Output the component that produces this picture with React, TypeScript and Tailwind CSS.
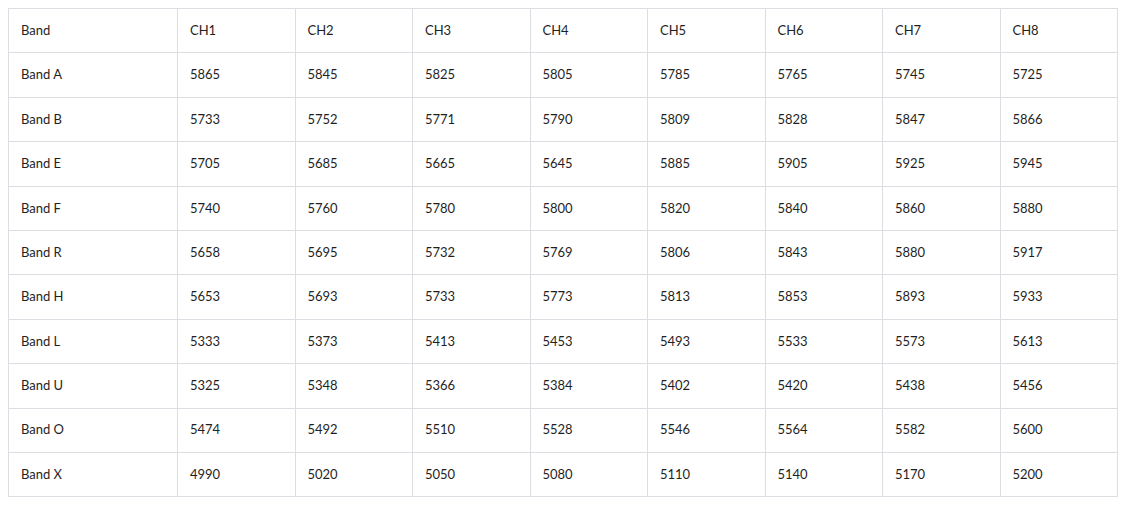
const headers = ["Band", "CH1", "CH2", "CH3", "CH4", "CH5", "CH6", "CH7", "CH8"];

const rows: [string, number[]][] = [
  ["Band A", [5865, 5845, 5825, 5805, 5785, 5765, 5745, 5725]],
  ["Band B", [5733, 5752, 5771, 5790, 5809, 5828, 5847, 5866]],
  ["Band E", [5705, 5685, 5665, 5645, 5885, 5905, 5925, 5945]],
  ["Band F", [5740, 5760, 5780, 5800, 5820, 5840, 5860, 5880]],
  ["Band R", [5658, 5695, 5732, 5769, 5806, 5843, 5880, 5917]],
  ["Band H", [5653, 5693, 5733, 5773, 5813, 5853, 5893, 5933]],
  ["Band L", [5333, 5373, 5413, 5453, 5493, 5533, 5573, 5613]],
  ["Band U", [5325, 5348, 5366, 5384, 5402, 5420, 5438, 5456]],
  ["Band O", [5474, 5492, 5510, 5528, 5546, 5564, 5582, 5600]],
  ["Band X", [4990, 5020, 5050, 5080, 5110, 5140, 5170, 5200]],
];

export default function App() {
  return (
    <div className="bg-white p-2 font-['Lato','Liberation_Sans',sans-serif] text-[13px] text-[#1f1f1f]">
      <table className="w-[1110px] table-fixed border-collapse">
        <colgroup>
          <col className="w-[169px]" />
          {headers.slice(1).map((h) => (
            <col key={h} />
          ))}
        </colgroup>
        <thead>
          <tr>
            {headers.map((h) => (
              <th key={h} className="h-[44.4px] border border-[#dddde3] px-3 text-left font-normal">
                {h}
              </th>
            ))}
          </tr>
        </thead>
        <tbody>
          {rows.map(([band, values]) => (
            <tr key={band}>
              <td className="h-[44.4px] border border-[#dddde3] px-3">{band}</td>
              {values.map((v, i) => (
                <td key={i} className="h-[44.4px] border border-[#dddde3] px-3">
                  {v}
                </td>
              ))}
            </tr>
          ))}
        </tbody>
      </table>
    </div>
  );
}
